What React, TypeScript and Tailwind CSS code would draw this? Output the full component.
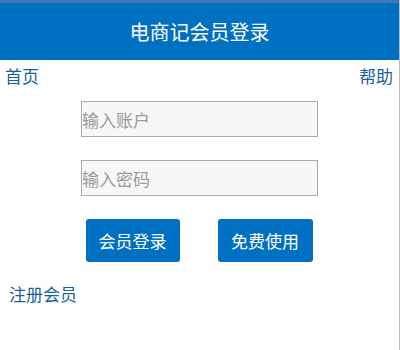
import { useState } from "react";

const font = { fontFamily: '"Noto Sans CJK SC", "Liberation Sans", sans-serif' };

export default function App() {
  const [account, setAccount] = useState("");
  const [password, setPassword] = useState("");

  return (
    <div style={font} className="w-[400px] h-[350px] bg-white border-r border-[#bdbdbd] flex flex-col overflow-hidden">
      <div className="h-[60px] bg-[#0070c2] border-t-[3px] border-[#3f79b2] flex items-center justify-center">
        <span className="text-white text-[20px] leading-none">电商记会员登录</span>
      </div>

      <div className="flex justify-between pl-[5px] pr-[6px] mt-[4px] text-[17px] leading-6 text-[#1a5f9e]">
        <a href="#">首页</a>
        <a href="#">帮助</a>
      </div>

      <div className="flex flex-col items-center mt-[13px] gap-[23px]">
        <input
          value={account}
          onChange={(e) => setAccount(e.target.value)}
          placeholder="输入账户"
          className="w-[237px] h-[36px] border border-[#ababab] bg-[#f7f7f7] px-0 text-[17px] text-[#555] placeholder:text-[#9a9a9a] outline-none"
        />
        <input
          type="password"
          value={password}
          onChange={(e) => setPassword(e.target.value)}
          placeholder="输入密码"
          className="w-[237px] h-[36px] border border-[#ababab] bg-[#f7f7f7] px-0 text-[17px] text-[#555] placeholder:text-[#9a9a9a] outline-none"
        />
      </div>

      <div className="flex justify-center gap-[38px] mt-[23px] pr-[1px]">
        <button className="w-[94px] h-[43px] rounded-[3px] bg-[#0070c2] text-white text-[17px]">会员登录</button>
        <button className="w-[95px] h-[43px] rounded-[3px] bg-[#0070c2] text-white text-[17px]">免费使用</button>
      </div>

      <div className="pl-[9px] mt-[20px] text-[17px] leading-6 text-[#1a5f9e]">
        <a href="#">注册会员</a>
      </div>
    </div>
  );
}
